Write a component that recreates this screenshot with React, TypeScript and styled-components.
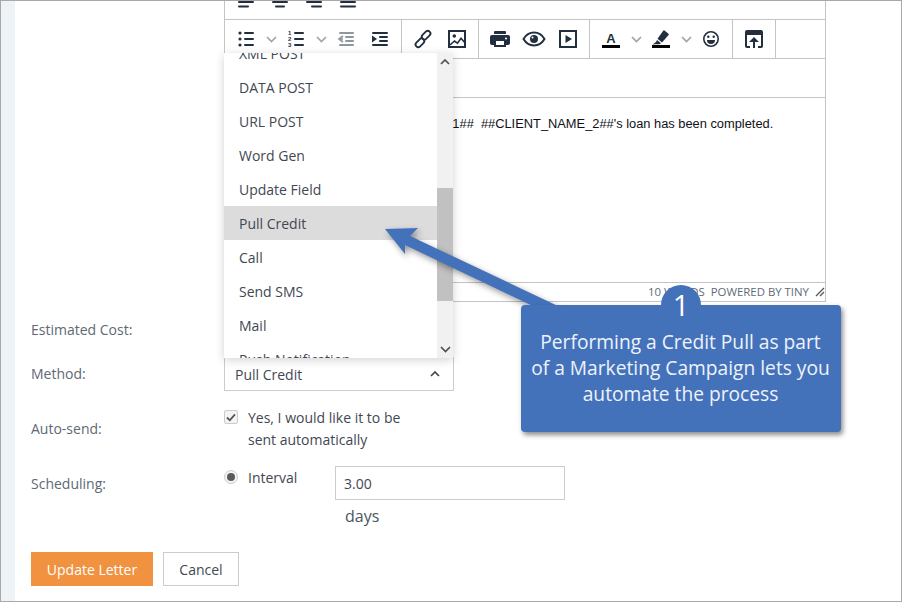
import React from "react";
import styled, { createGlobalStyle } from "styled-components";

const Global = createGlobalStyle`
  html, body { margin: 0; padding: 0; background: #fff; }
  * { box-sizing: border-box; }
`;

const Frame = styled.div`
  position: relative;
  width: 902px;
  height: 602px;
  overflow: hidden;
  display: flex;
  background: #fff;
  border: 1px solid #a8a8a8;
  font-family: "Open Sans", "Liberation Sans", sans-serif;
  font-size: 14px;
  color: #3f4852;
`;
const Strip = styled.div`
  width: 14px;
  flex: none;
  background: #eef3f8;
`;
const Main = styled.main`
  flex: 1;
  padding-left: 16px;
  display: flex;
  flex-direction: column;
`;
const Row = styled.div<{ $h?: number; $mt?: number; $align?: string }>`
  display: grid;
  grid-template-columns: 193px 1fr;
  align-items: ${(p) => p.$align ?? "center"};
  ${(p) => (p.$h ? `height: ${p.$h}px;` : "")}
  margin-top: ${(p) => p.$mt ?? 0}px;
`;
const Label = styled.label<{ $lh?: number }>`
  color: #5e6973;
  line-height: ${(p) => p.$lh ?? 20}px;
`;
const Editor = styled.div`
  width: 602px;
  border-left: 1px solid #c4c4c4;
  border-right: 1px solid #c4c4c4;
  border-bottom: 1px solid #c4c4c4;
  display: flex;
  flex-direction: column;
`;
const ClippedBar = styled.div`
  height: 19px;
  padding-left: 4px;
  display: flex;
  border-bottom: 1px solid #c4c4c4;
`;
const Toolbar = styled.div`
  height: 39px;
  display: flex;
  border-bottom: 1px solid #c4c4c4;
`;
const Group = styled.div`
  display: flex;
  align-items: center;
  padding: 0 4px;
  border-right: 1px solid #c4c4c4;
  height: 100%;
`;
const ToolButton = styled.span`
  width: 34px;
  height: 24px;
  display: flex;
  align-items: center;
  justify-content: center;
  color: #222f3e;
`;
const TopButton = styled.span`
  width: 34px;
  height: 18px;
  display: flex;
  justify-content: center;
  color: #222f3e;
`;
const Chevron = styled.span`
  width: 16px;
  height: 24px;
  display: flex;
  align-items: center;
  justify-content: center;
  color: #a0a4a8;
`;
const BlankBar = styled.div`
  height: 39px;
  border-bottom: 1px solid #c4c4c4;
`;
const Content = styled.div`
  height: 184px;
  padding: 19px 0 0 116px;
  font-family: "Liberation Sans", Arial, sans-serif;
  font-size: 12.85px;
  line-height: 14px;
  color: #101018;
  white-space: pre;
`;
const StatusBar = styled.div`
  height: 19px;
  border-top: 1px solid #c4c4c4;
  display: flex;
  align-items: center;
  justify-content: flex-end;
  font-size: 11.4px;
  line-height: 16px;
  color: #5f6b76;
  white-space: pre;
`;
const Grip = styled.svg`
  margin-left: 6px;
  color: #555;
`;
const Select = styled.div`
  width: 230px;
  height: 34px;
  border: 1px solid #ccc;
  padding: 0 13px 0 10px;
  display: flex;
  align-items: center;
  justify-content: space-between;
  color: #3f4852;
`;
const CheckLine = styled.div`
  display: flex;
  gap: 10px;
  line-height: 22px;
  color: #3f4852;
`;
const CheckBox = styled.span`
  width: 14px;
  height: 14px;
  margin-top: 3px;
  flex: none;
  border: 1px solid #ccc;
  border-radius: 2px;
  background: #f4f4f4;
  display: flex;
  align-items: center;
  justify-content: center;
  color: #555;
`;
const Radio = styled.span`
  width: 14px;
  height: 14px;
  margin-top: 4px;
  flex: none;
  border: 1px solid #ccc;
  border-radius: 50%;
  background: #f4f4f4;
  display: flex;
  align-items: center;
  justify-content: center;
  &::after {
    content: "";
    width: 8px;
    height: 8px;
    border-radius: 50%;
    background: #5a5a5a;
  }
`;
const ScheduleField = styled.div`
  display: grid;
  grid-template-columns: 111px 230px;
`;
const RadioLine = styled.div`
  display: flex;
  gap: 10px;
  line-height: 23px;
  color: #3f4852;
  align-self: start;
`;
const TextInput = styled.div`
  height: 34px;
  border: 1px solid #ccc;
  padding-left: 8px;
  display: flex;
  align-items: center;
  color: #3f4852;
`;
const Unit = styled.div`
  grid-column: 2;
  padding-left: 10px;
  margin-top: 4px;
  font-size: 16px;
  line-height: 24px;
  color: #4a5560;
`;
const Actions = styled.div`
  display: flex;
  gap: 10px;
  margin-top: 24px;
`;
const Button = styled.button<{ $primary?: boolean }>`
  height: 34px;
  width: ${(p) => (p.$primary ? 122 : 76)}px;
  padding: 0;
  border: 1px solid ${(p) => (p.$primary ? "#f0923f" : "#ccc")};
  background: ${(p) => (p.$primary ? "#f0923f" : "#fff")};
  color: ${(p) => (p.$primary ? "#fff" : "#3f4852")};
  font: inherit;
`;
const Dropdown = styled.div`
  position: absolute;
  left: 223px;
  top: 52px;
  width: 229px;
  height: 305px;
  display: flex;
  background: #fff;
  box-shadow: 0 2px 9px rgba(0, 0, 0, 0.18);
`;
const MenuList = styled.ul`
  flex: 1;
  margin: 0;
  padding: 0;
  list-style: none;
  overflow: hidden;
`;
const MenuItem = styled.li<{ $active?: boolean; $first?: boolean }>`
  height: 34px;
  padding-left: 15px;
  display: flex;
  align-items: center;
  flex: none;
  color: #3f4852;
  background: ${(p) => (p.$active ? "#dcdcdc" : "transparent")};
  ${(p) => (p.$first ? "margin-top: -17px;" : "")}
`;
const Track = styled.div`
  width: 16px;
  background: #f1f1f1;
  display: flex;
  flex-direction: column;
  align-items: center;
  color: #505050;
`;
const TrackArrow = styled.span<{ $bottom?: boolean }>`
  height: 17px;
  display: flex;
  align-items: center;
  ${(p) => (p.$bottom ? "margin-top: auto;" : "")}
`;
const Thumb = styled.div`
  width: 16px;
  height: 113px;
  margin-top: 118px;
  background: #c1c1c1;
`;
const ArrowLayer = styled.svg`
  position: absolute;
  left: -1px;
  top: -1px;
  filter: drop-shadow(2px 3px 3px rgba(0, 0, 0, 0.4));
  pointer-events: none;
`;
const Callout = styled.aside`
  position: absolute;
  left: 520px;
  top: 304px;
  width: 320px;
  height: 127px;
  padding: 24px 1px 0 0;
  border-radius: 4px;
  background: #4472ba;
  box-shadow: 2px 3px 5px rgba(0, 0, 0, 0.45);
  color: #eef2fa;
  font-size: 19.2px;
  line-height: 26px;
  text-align: center;
`;
const Badge = styled.span`
  position: absolute;
  left: 140px;
  top: -20px;
  width: 40px;
  height: 40px;
  border-radius: 50%;
  background: #4472ba;
  color: #fff;
  font-size: 29px;
  line-height: 40px;
  text-align: center;
`;

const Bar = ({ x, y, w, h = 2 }: { x: number; y: number; w: number; h?: number }) => (
  <rect x={x} y={y} width={w} height={h} rx={h / 2} fill="currentColor" />
);

const Align = ({ bx, bw }: { bx: number; bw: number }) => (
  <svg width="24" height="18" viewBox="0 0 24 18">
    <Bar x={4} y={0} w={16} />
    <Bar x={bx} y={4.5} w={bw} />
  </svg>
);

const Svg = ({ children }: { children: React.ReactNode }) => (
  <svg width="24" height="24" viewBox="0 0 24 24">
    {children}
  </svg>
);

const Down = () => (
  <svg width="11" height="7" viewBox="0 0 11 7">
    <polyline points="1,1 5.5,5.5 10,1" fill="none" stroke="currentColor" strokeWidth="1.7" />
  </svg>
);

const BulletList = () => (
  <Svg>
    <circle cx="6" cy="6" r="1.6" fill="currentColor" />
    <circle cx="6" cy="12" r="1.6" fill="currentColor" />
    <circle cx="6" cy="18" r="1.6" fill="currentColor" />
    <Bar x={10} y={5} w={10} />
    <Bar x={10} y={11} w={10} />
    <Bar x={10} y={17} w={10} />
  </Svg>
);
const NumberList = () => (
  <Svg>
    <text x="4" y="8" fontSize="6" fontWeight="700" fontFamily="Liberation Sans" fill="currentColor">1</text>
    <text x="4" y="14" fontSize="6" fontWeight="700" fontFamily="Liberation Sans" fill="currentColor">2</text>
    <text x="4" y="20" fontSize="6" fontWeight="700" fontFamily="Liberation Sans" fill="currentColor">3</text>
    <Bar x={10} y={5} w={10} />
    <Bar x={10} y={11} w={10} />
    <Bar x={10} y={17} w={10} />
  </Svg>
);
const Outdent = () => (
  <svg width="24" height="24" viewBox="0 0 24 24" opacity="0.5">
    <Bar x={5} y={5} w={15} />
    <Bar x={11} y={9} w={9} />
    <Bar x={11} y={13} w={9} />
    <Bar x={5} y={17} w={15} />
    <polyline points="9,9 5,12 9,15" fill="none" stroke="currentColor" strokeWidth="1.6" />
    <rect x="5" y="11.2" width="4" height="1.6" fill="currentColor" />
  </svg>
);
const Indent = () => (
  <Svg>
    <Bar x={4} y={5} w={16} />
    <Bar x={11} y={9} w={9} />
    <Bar x={11} y={13} w={9} />
    <Bar x={4} y={17} w={16} />
    <polygon points="4,8.5 9,12 4,15.5" fill="currentColor" />
  </Svg>
);
const Link = () => (
  <Svg>
    <g fill="none" stroke="currentColor" strokeWidth="1.8">
      <rect x="12.4" y="3.2" width="5.4" height="10" rx="2.7" transform="rotate(45 15.1 8.2)" />
      <rect x="6.2" y="10.800" width="5.4" height="10" rx="2.7" transform="rotate(45 8.9 15.800)" />
    </g>
  </Svg>
);
const ImageIcon = () => (
  <Svg>
    <rect x="4" y="4" width="16" height="16" fill="none" stroke="currentColor" strokeWidth="2" />
    <circle cx="9.3" cy="9" r="1.8" fill="currentColor" />
    <path d="M5 18l4.5-4 3 2.2 3.5-5 3.5 4" fill="none" stroke="currentColor" strokeWidth="1.6" />
  </Svg>
);
const Printer = () => (
  <Svg>
    <path fill="currentColor" fillRule="evenodd" d="M7 4h10a1 1 0 0 1 1 1v2H6V5a1 1 0 0 1 1-1zM4 8h16a2 2 0 0 1 2 2v6a2 2 0 0 1-2 2h-2v2H6v-2H4a2 2 0 0 1-2-2v-6a2 2 0 0 1 2-2zm4 6v4h8v-4H8zm10-3.5a1 1 0 1 0 0 2 1 1 0 0 0 0-2z" />
  </Svg>
);
const Eye = () => (
  <Svg>
    <path d="M1.5 12C4 7.8 7.6 5.6 12 5.6s8 2.2 10.5 6.4c-2.5 4.2-6.100 6.400-10.500 6.400S4 16.200 1.500 12z" fill="none" stroke="currentColor" strokeWidth="2" />
    <circle cx="12" cy="12" r="4" fill="currentColor" />
    <circle cx="10.500" cy="10.500" r="1" fill="#fff" />
  </Svg>
);
const Play = () => (
  <Svg>
    <rect x="4" y="4" width="16" height="16" fill="none" stroke="currentColor" strokeWidth="2" />
    <polygon points="9.500,8 16,12 9.500,16" fill="currentColor" />
  </Svg>
);
const TextColor = () => (
  <Svg>
    <text x="12" y="16" textAnchor="middle" fontSize="13" fontWeight="700" fontFamily="Liberation Sans" fill="currentColor">A</text>
    <rect x="3" y="18" width="18" height="3" fill="#000" />
  </Svg>
);
const Highlight = () => (
  <Svg>
    <path d="M15.500 3.500l4 3.200a1 1 0 0 1 .1 1.400L13 15.500l-4.500-3.700 5.700-8.100a1 1 0 0 1 1.300-.2zM8 13l4 3.300-1.500 1H6l-2.500.2L7 15z" fill="currentColor" />
    <rect x="3" y="18" width="18" height="3" fill="#000" />
  </Svg>
);
const Smile = () => (
  <Svg>
    <circle cx="12" cy="12" r="7.200" fill="none" stroke="currentColor" strokeWidth="1.600" />
    <circle cx="9.300" cy="9.800" r="1.200" fill="currentColor" />
    <circle cx="14.700" cy="9.800" r="1.200" fill="currentColor" />
    <path d="M8 13h8a4 4 0 0 1-8 0z" fill="currentColor" />
  </Svg>
);
const Publish = () => (
  <Svg>
    <path fill="currentColor" fillRule="evenodd" d="M5 3h14a2 2 0 0 1 2 2v14a2 2 0 0 1-2 2h-3v-2h3V8H5v11h3v2H5a2 2 0 0 1-2-2V5a2 2 0 0 1 2-2z" />
    <path fill="currentColor" d="M12 10l5 5h-4v6h-2v-6H7z" />
  </Svg>
);

const Up = () => (
  <svg width="10" height="6" viewBox="0 0 10 6">
    <polyline points="1,5 5,1 9,5" fill="none" stroke="currentColor" strokeWidth="1.700" />
  </svg>
);

const methods = [
  "XML POST",
  "DATA POST",
  "URL POST",
  "Word Gen",
  "Update Field",
  "Pull Credit",
  "Call",
  "Send SMS",
  "Mail",
  "Push Notification",
];

export default function App() {
  return (
    <Frame>
      <Global />
      <Strip />
      <Main>
        <Row $align="start">
          <span />
          <Editor>
            <ClippedBar>
              <TopButton><Align bx={4} bw={11} /></TopButton>
              <TopButton><Align bx={7} bw={10} /></TopButton>
              <TopButton><Align bx={9} bw={11} /></TopButton>
              <TopButton><Align bx={4} bw={16} /></TopButton>
            </ClippedBar>
            <Toolbar>
              <Group>
                <ToolButton><BulletList /></ToolButton>
                <Chevron><Down /></Chevron>
                <ToolButton><NumberList /></ToolButton>
                <Chevron><Down /></Chevron>
                <ToolButton><Outdent /></ToolButton>
                <ToolButton><Indent /></ToolButton>
              </Group>
              <Group>
                <ToolButton><Link /></ToolButton>
                <ToolButton><ImageIcon /></ToolButton>
              </Group>
              <Group>
                <ToolButton><Printer /></ToolButton>
                <ToolButton><Eye /></ToolButton>
                <ToolButton><Play /></ToolButton>
              </Group>
              <Group>
                <ToolButton><TextColor /></ToolButton>
                <Chevron><Down /></Chevron>
                <ToolButton><Highlight /></ToolButton>
                <Chevron><Down /></Chevron>
                <ToolButton><Smile /></ToolButton>
              </Group>
              <Group>
                <ToolButton><Publish /></ToolButton>
              </Group>
            </Toolbar>
            <BlankBar />
            <Content>{"##CLIENT_NAME_1##  ##CLIENT_NAME_2##'s loan has been completed."}</Content>
            <StatusBar>
              {"10 WORDS  POWERED BY TINY"}
              <Grip width="10" height="10" viewBox="0 0 10 10">
                <path d="M1 9l8-8M5 9l4-4" stroke="currentColor" strokeWidth="1.300" fill="none" />
              </Grip>
            </StatusBar>
          </Editor>
        </Row>
        <Row $h={55}>
          <Label>Estimated Cost:</Label>
          <span />
        </Row>
        <Row>
          <Label>Method:</Label>
          <Select>
            Pull Credit
            <Up />
          </Select>
        </Row>
        <Row $mt={16}>
          <Label>Auto-send:</Label>
          <CheckLine>
            <CheckBox>
              <svg width="10" height="9" viewBox="0 0 10 9">
                <polyline points="1,4.500 3.800,7.300 9,1.300" fill="none" stroke="currentColor" strokeWidth="1.800" />
              </svg>
            </CheckBox>
            <span>
              Yes, I would like it to be
              <br />
              sent automatically
            </span>
          </CheckLine>
        </Row>
        <Row $mt={15} $align="start">
          <Label $lh={36}>Scheduling:</Label>
          <ScheduleField>
            <RadioLine>
              <Radio />
              Interval
            </RadioLine>
            <TextInput>3.00</TextInput>
            <Unit>days</Unit>
          </ScheduleField>
        </Row>
        <Actions>
          <Button $primary>Update Letter</Button>
          <Button>Cancel</Button>
        </Actions>
      </Main>
      <Dropdown>
        <MenuList>
          {methods.map((m, i) => (
            <MenuItem key={m} $first={i === 0} $active={m === "Pull Credit"}>
              {m}
            </MenuItem>
          ))}
        </MenuList>
        <Track>
          <TrackArrow><Up /></TrackArrow>
          <Thumb />
          <TrackArrow $bottom><Down /></TrackArrow>
        </Track>
      </Dropdown>
      <ArrowLayer width="902" height="602" viewBox="0 0 902 602">
        <polygon points="385,229 418,228 410,236 560,307 535,307 405,245 405,254" fill="#4472ba" />
      </ArrowLayer>
      <Callout>
        <Badge>1</Badge>
        Performing a Credit Pull as part
        <br />
        of a Marketing Campaign lets you
        <br />
        automate the process
      </Callout>
    </Frame>
  );
}
